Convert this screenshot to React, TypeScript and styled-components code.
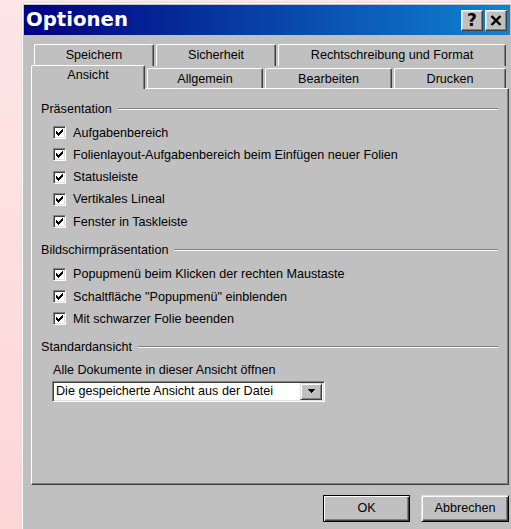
import React from "react";
import styled, { createGlobalStyle } from "styled-components";

const GlobalStyle = createGlobalStyle`
  html, body {
    margin: 0;
    padding: 0;
  }
  body {
    width: 511px;
    height: 529px;
    overflow: hidden;
    background: linear-gradient(180deg, #fee6e6 0%, #fdd6d6 100%);
    font-family: "Liberation Sans", Arial, sans-serif;
    font-size: 12.6px;
    color: #000;
  }
`;

const Desktop = styled.div`
  height: 529px;
  padding: 2px 0 0 21px;
  box-sizing: border-box;
  overflow: hidden;
`;

const Window = styled.div`
  width: 492px;
  height: 540px;
  box-sizing: border-box;
  background: #c0c0c0;
  border: 1px solid;
  border-color: #dfdfdf #404040 #404040 #dfdfdf;
  box-shadow: inset 1px 1px #fff, inset -1px -1px #808080;
  padding: 2px;
  display: flex;
  flex-direction: column;
`;

const TitleBar = styled.div`
  height: 30px;
  display: flex;
  align-items: center;
  padding: 0 3px 0 2px;
  background: linear-gradient(90deg, #000080 0%, #1084d0 100%);
`;

const Caption = styled.div`
  flex: 1;
  color: #fff;
  font-family: "DejaVu Sans", Verdana, sans-serif;
  font-weight: bold;
  font-size: 19.7px;
  line-height: 30px;
`;

const CaptionButton = styled.div<{ $gap?: number }>`
  width: 22px;
  height: 21px;
  box-sizing: border-box;
  margin-left: ${(p) => p.$gap ?? 0}px;
  background: #c0c0c0;
  border: 1px solid;
  border-color: #fff #404040 #404040 #fff;
  box-shadow: inset -1px -1px #808080, inset 1px 1px #dfdfdf;
  display: flex;
  align-items: center;
  justify-content: center;
  font-family: "DejaVu Sans", Verdana, sans-serif;
  font-weight: bold;
  font-size: 17px;
  line-height: 1;
`;

const Body = styled.div`
  padding: 10px 0 0 7px;
  display: flex;
  flex-direction: column;
`;

const TabRow = styled.div<{ $front?: boolean }>`
  display: flex;
  align-items: flex-end;
  height: 21px;
  padding-left: ${(p) => (p.$front ? 0 : 3)}px;
  margin-top: ${(p) => (p.$front ? 1 : 0)}px;
`;

const Tab = styled.div<{ $w: number; $active?: boolean; $back?: boolean }>`
  position: relative;
  z-index: ${(p) => (p.$active ? 2 : 0)};
  width: ${(p) => p.$w}px;
  height: ${(p) => (p.$active ? 24 : p.$back ? 22 : 20)}px;
  margin-right: 2px;
  margin-bottom: ${(p) => (p.$active ? -1 : 0)}px;
  box-sizing: border-box;
  background: #c0c0c0;
  border-top: 1px solid #fff;
  border-left: 1px solid #fff;
  border-right: 1px solid #404040;
  border-radius: 2px 2px 0 0;
  box-shadow: inset -1px 0 #808080;
  text-align: center;
  padding-top: ${(p) => (p.$active ? 2 : 3)}px;
  line-height: 15px;
  white-space: nowrap;
`;

const Panel = styled.div`
  width: 478px;
  height: 397px;
  box-sizing: border-box;
  border: 1px solid;
  border-color: #fff #404040 #404040 #fff;
  box-shadow: inset -1px -1px #808080;
  padding: 11.5px 10px 0 9px;
  display: flex;
  flex-direction: column;
`;

const Group = styled.div<{ $first?: boolean }>`
  display: flex;
  flex-direction: column;
  margin-top: ${(p) => (p.$first ? 0 : 9.4)}px;
`;

const Heading = styled.div`
  display: flex;
  align-items: center;
  height: 16px;
  line-height: 16px;
  white-space: nowrap;

  &::after {
    content: "";
    flex: 1;
    margin-left: 6px;
    border-top: 1px solid #808080;
    border-bottom: 1px solid #fff;
  }
`;

const Options = styled.div`
  margin-top: 5px;
  padding-left: 12px;
  display: flex;
  flex-direction: column;
`;

const Row = styled.label`
  height: 22.25px;
  display: flex;
  align-items: center;
  white-space: nowrap;
`;

const Box = styled.span`
  width: 13px;
  height: 13px;
  box-sizing: border-box;
  flex: none;
  background: #fff;
  border: 1px solid;
  border-color: #808080 #fff #fff #808080;
  box-shadow: inset 1px 1px #404040, inset -1px -1px #dfdfdf;
  display: flex;
  align-items: center;
  justify-content: center;
  margin-right: 7px;
`;

const FieldLabel = styled.div`
  margin-top: 6.7px;
  padding-left: 12px;
  line-height: 16px;
`;

const Combo = styled.div`
  margin: 3px 0 0 11px;
  width: 273px;
  height: 21px;
  box-sizing: border-box;
  background: #fff;
  border: 1px solid;
  border-color: #808080 #fff #fff #808080;
  box-shadow: inset 1px 1px #404040, inset -1px -1px #dfdfdf;
  padding: 2px;
  display: flex;
  align-items: center;
`;

const ComboText = styled.div`
  flex: 1;
  padding-left: 1px;
  line-height: 15px;
  white-space: nowrap;
`;

const ComboButton = styled.div`
  width: 22px;
  height: 17px;
  box-sizing: border-box;
  background: #c0c0c0;
  border: 1px solid;
  border-color: #dfdfdf #404040 #404040 #dfdfdf;
  box-shadow: inset 1px 1px #fff, inset -1px -1px #808080;
  display: flex;
  align-items: center;
  justify-content: center;
`;

const Footer = styled.div`
  display: flex;
  justify-content: flex-end;
  gap: 11px;
  margin-top: 10px;
  padding-right: 1px;
`;

const Button = styled.div<{ $w: number; $default?: boolean }>`
  width: ${(p) => p.$w}px;
  height: 27px;
  box-sizing: border-box;
  background: #c0c0c0;
  border: 1px solid;
  border-color: ${(p) => (p.$default ? "#000" : "#dfdfdf #000 #000 #dfdfdf")};
  box-shadow: inset 1px 1px #fff, inset -1px -1px #404040, inset -2px -2px #808080;
  display: flex;
  align-items: center;
  justify-content: center;
  line-height: 15px;
`;

// classic 7x7 check mark, one 3px column per x
const checkCols = [2, 3, 4, 3, 2, 1, 0];

const Check = () => (
  <svg width="7" height="7" viewBox="0 0 7 7" shapeRendering="crispEdges">
    {checkCols.map((y, x) => (
      <rect key={x} x={x} y={y} width="1" height="3" fill="#000" />
    ))}
  </svg>
);

const CloseGlyph = () => (
  <svg width="12" height="11" viewBox="0 0 12 11">
    <path d="M1.5 1L10.5 10M10.5 1L1.5 10" stroke="#000" strokeWidth="2.4" />
  </svg>
);

const Arrow = () => (
  <svg width="7" height="4" viewBox="0 0 7 4" shapeRendering="crispEdges">
    <path d="M0 0h7L3.5 4z" fill="#000" />
  </svg>
);

const Option = ({ children }: { children: React.ReactNode }) => (
  <Row>
    <Box>
      <Check />
    </Box>
    {children}
  </Row>
);

const praesentation = [
  "Aufgabenbereich",
  "Folienlayout-Aufgabenbereich beim Einfügen neuer Folien",
  "Statusleiste",
  "Vertikales Lineal",
  "Fenster in Taskleiste",
];

const bildschirm = [
  "Popupmenü beim Klicken der rechten Maustaste",
  'Schaltfläche "Popupmenü" einblenden',
  "Mit schwarzer Folie beenden",
];

export default function App() {
  return (
    <>
      <GlobalStyle />
      <Desktop>
        <Window>
          <TitleBar>
            <Caption>Optionen</Caption>
            <CaptionButton>?</CaptionButton>
            <CaptionButton $gap={2}>
              <CloseGlyph />
            </CaptionButton>
          </TitleBar>

          <Body>
            <TabRow>
              <Tab $w={120} $back>Speichern</Tab>
              <Tab $w={120} $back>Sicherheit</Tab>
              <Tab $w={228} $back>Rechtschreibung und Format</Tab>
            </TabRow>
            <TabRow $front>
              <Tab $w={114} $active>Ansicht</Tab>
              <Tab $w={116}>Allgemein</Tab>
              <Tab $w={127}>Bearbeiten</Tab>
              <Tab $w={112}>Drucken</Tab>
            </TabRow>

            <Panel>
              <Group $first>
                <Heading>Präsentation</Heading>
                <Options>
                  {praesentation.map((t) => (
                    <Option key={t}>{t}</Option>
                  ))}
                </Options>
              </Group>

              <Group>
                <Heading>Bildschirmpräsentation</Heading>
                <Options>
                  {bildschirm.map((t) => (
                    <Option key={t}>{t}</Option>
                  ))}
                </Options>
              </Group>

              <Group>
                <Heading>Standardansicht</Heading>
                <FieldLabel>Alle Dokumente in dieser Ansicht öffnen</FieldLabel>
                <Combo>
                  <ComboText>Die gespeicherte Ansicht aus der Datei</ComboText>
                  <ComboButton>
                    <Arrow />
                  </ComboButton>
                </Combo>
              </Group>
            </Panel>

            <Footer>
              <Button $w={87} $default>
                OK
              </Button>
              <Button $w={88}>Abbrechen</Button>
            </Footer>
          </Body>
        </Window>
      </Desktop>
    </>
  );
}
